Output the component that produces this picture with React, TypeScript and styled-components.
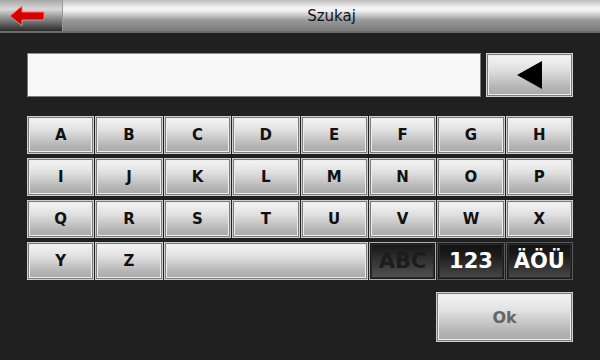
import React from "react";
import styled, { createGlobalStyle } from "styled-components";

const GlobalStyle = createGlobalStyle`
  html, body {
    margin: 0;
    padding: 0;
    background: #202020;
  }
  body {
    font-family: "DejaVu Sans", Verdana, sans-serif;
  }
`;

const Screen = styled.div`
  width: 600px;
  height: 360px;
  background: #202020;
  overflow: hidden;
  display: flex;
  flex-direction: column;
`;

const Header = styled.div`
  height: 31px;
  display: flex;
  border-bottom: 2px solid #6c6c6c;
  background: linear-gradient(
    #bdbdbd 0%,
    #f4f4f4 25%,
    #f0f0f0 35%,
    #9a9a9a 65%,
    #7a7a7a 100%
  );
`;

const BackButton = styled.div`
  width: 63px;
  display: flex;
  align-items: center;
  justify-content: flex-start;
  padding-left: 9px;
  box-sizing: border-box;
  border-right: 1px solid #9a9a9a;
  background: linear-gradient(
    #a8a8a8 0%,
    #d8d8d8 30%,
    #8a8a8a 60%,
    #2a2a2a 100%
  );
`;

const Title = styled.div`
  flex: 1;
  display: flex;
  align-items: center;
  justify-content: center;
  font-size: 15px;
  color: #111;
`;

const Body = styled.div`
  padding: 20px 27px 0 27px;
  display: flex;
  flex-direction: column;
`;

const InputRow = styled.div`
  display: flex;
  gap: 5px;
  height: 44px;
`;

const TextField = styled.div`
  flex: 1;
  background: #f8f8f8;
  border: 1px solid #7a7a7a;
  border-top-color: #909090;
`;

const Key = styled.div<{ $dark?: boolean; $active?: boolean }>`
  box-sizing: border-box;
  display: flex;
  align-items: center;
  justify-content: center;
  font-weight: bold;
  border: 1px solid ${(p) => (p.$dark ? (p.$active ? "#b0b0b0" : "#5a5a5a") : "#cfcfcf")};
  box-shadow: inset 0 0 0 1px ${(p) => (p.$dark ? "#1a1a1a" : "#7c7c7c")},
    inset 0 0 0 2px ${(p) => (p.$dark ? "#2a2a2a" : "#ececec")};
  background: ${(p) =>
    p.$dark
      ? p.$active
        ? "linear-gradient(#141414 0%, #2a2a2a 35%, #474747 80%, #525252 100%)"
        : "linear-gradient(#101010 0%, #1c1c1c 35%, #3c3c3c 80%, #4a4a4a 100%)"
      : "linear-gradient(#f6f6f6 0%, #e2e2e2 35%, #b4b4b4 80%, #a8a8a8 100%)"};
  color: ${(p) => (p.$dark ? (p.$active ? "#1c1c1c" : "#ffffff") : "#111")};
  font-size: ${(p) => (p.$dark ? "21px" : "15px")};
  user-select: none;
`;

const BackspaceKey = styled(Key)`
  width: 87px;
`;

const Keyboard = styled.div`
  margin-top: 19px;
  display: grid;
  grid-template-columns: repeat(8, 1fr);
  grid-auto-rows: 38px;
  column-gap: 1px;
  row-gap: 4px;
`;

const SpaceKey = styled(Key)`
  grid-column: span 3;
`;

const Footer = styled.div`
  margin-top: 12px;
  display: flex;
  justify-content: flex-end;
`;

const OkKey = styled(Key)`
  width: 137px;
  height: 50px;
  font-size: 16px;
  color: #666;
`;

const rows = [
  ["A", "B", "C", "D", "E", "F", "G", "H"],
  ["I", "J", "K", "L", "M", "N", "O", "P"],
  ["Q", "R", "S", "T", "U", "V", "W", "X"],
];

const RedArrow = () => (
  <svg width="36" height="22" viewBox="0 0 36 22">
    <polygon
      points="1,11 13,1 13,7 35,7 35,15 13,15 13,21"
      fill="#d40000"
      stroke="#f08080"
      strokeWidth="1"
    />
  </svg>
);

const LeftTriangle = () => (
  <svg width="26" height="28" viewBox="0 0 26 28">
    <polygon points="0,14 25,0 25,28" fill="#000" />
  </svg>
);

export default function App() {
  return (
    <Screen>
      <GlobalStyle />
      <Header>
        <BackButton>
          <RedArrow />
        </BackButton>
        <Title>Szukaj</Title>
      </Header>
      <Body>
        <InputRow>
          <TextField />
          <BackspaceKey>
            <LeftTriangle />
          </BackspaceKey>
        </InputRow>
        <Keyboard>
          {rows.flat().map((k) => (
            <Key key={k}>{k}</Key>
          ))}
          <Key>Y</Key>
          <Key>Z</Key>
          <SpaceKey />
          <Key $dark $active>
            ABC
          </Key>
          <Key $dark>123</Key>
          <Key $dark>ÄÖÜ</Key>
        </Keyboard>
        <Footer>
          <OkKey>Ok</OkKey>
        </Footer>
      </Body>
    </Screen>
  );
}
